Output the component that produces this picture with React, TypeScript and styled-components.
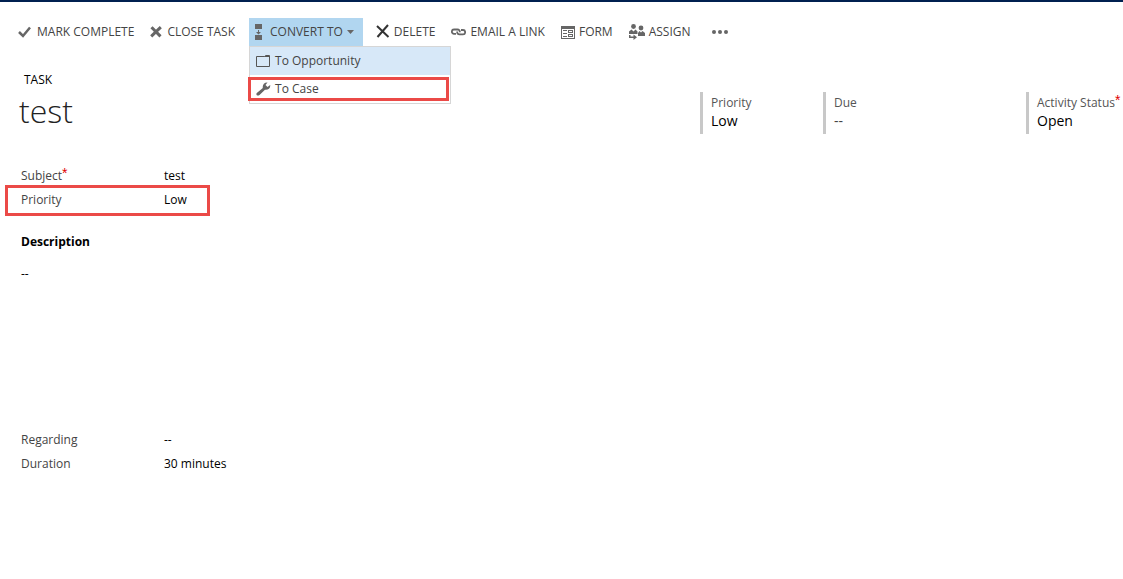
import React from "react";
import styled, { createGlobalStyle, css } from "styled-components";

const GlobalStyle = createGlobalStyle`
  * { box-sizing: border-box; }
  body {
    margin: 0;
    background: #fff;
    color: #000;
    font: 12px/16px "Open Sans", "Noto Sans", sans-serif;
  }
`;

const Page = styled.div`
  border-top: 2px solid #002050;
`;

const CommandBar = styled.nav`
  display: flex;
  align-items: center;
  padding: 16px 10px 0;
`;

const Command = styled.button<{ $open?: boolean; $wide?: boolean }>`
  display: flex;
  align-items: center;
  gap: 4px;
  height: 28px;
  padding: 0 ${(p) => (p.$wide ? 13 : 8)}px;
  border: 0;
  background: transparent;
  color: #444;
  font: inherit;
  white-space: nowrap;
  cursor: pointer;
  ${(p) => p.$open && css`
    padding: 0 9px 0 5px;
    background: #b1d6f0;
  `}
`;

const Icon = styled.svg`
  display: block;
  flex: none;
  fill: #666;
`;

const MenuAnchor = styled.div`
  position: relative;
  margin: 0 5px 0 6px;
`;

const Menu = styled.div`
  position: absolute;
  top: 28px;
  left: 0;
  width: 202px;
  border: 1px solid #d6d6d6;
  background: #fff;
`;

const highlight = css`
  position: relative;
  &::after {
    content: "";
    position: absolute;
    border: 3px solid #eb4a47;
    pointer-events: none;
  }
`;

const MenuItem = styled.button<{ $active?: boolean; $marked?: boolean }>`
  display: flex;
  align-items: center;
  gap: 4px;
  width: 100%;
  height: 28px;
  padding: 0 6px;
  border: 0;
  background: ${(p) => (p.$active ? "#d7e8f8" : "#fff")};
  color: #444;
  font: inherit;
  text-align: left;
  cursor: pointer;
  ${(p) => p.$marked && css`
    ${highlight}
    &::after { inset: 2px 1px 2px -2px; }
  `}
`;

const Header = styled.header`
  display: flex;
  justify-content: space-between;
  padding: 26px 0 0 19px;
`;

const Kind = styled.div`
  padding-left: 5px;
`;

const Title = styled.h1`
  margin: 0;
  font-size: 32px;
  line-height: 46px;
  font-weight: 300;
  color: #222;
`;

const Summary = styled.dl`
  display: grid;
  grid-template-columns: 123px 203px 97px;
  margin: 20px 0 0;
`;

const Fact = styled.div`
  height: 42px;
  padding: 3px 0 0 8px;
  border-left: 3px solid #c8c8c8;
  white-space: nowrap;
`;

const FactLabel = styled.dt`
  color: #555;
`;

const FactValue = styled.dd<{ $empty?: boolean }>`
  margin: 0;
  color: ${(p) => (p.$empty ? "#444" : "#000")};
  font-size: 14px;
  line-height: 20px;
`;

const Required = styled.sup`
  color: #e00000;
  font-family: "Liberation Sans", sans-serif;
  font-size: 14px;
  line-height: 0;
  vertical-align: 2px;
`;

const Form = styled.main`
  padding: 30px 0 0 5px;
`;

const Fields = styled.dl`
  width: 205px;
  margin: 0;
`;

const Row = styled.div<{ $marked?: boolean }>`
  display: grid;
  grid-template-columns: 143px 1fr;
  align-items: center;
  height: 24px;
  padding-left: 16px;
  white-space: nowrap;
  ${(p) => p.$marked && css`
    ${highlight}
    &::after { inset: -3px 0 -4px; }
  `}
`;

const Label = styled.dt`
  color: #444;
`;

const Value = styled.dd`
  margin: 0;
`;

const Section = styled.section`
  min-height: 216px;
  padding: 22px 16px 0;
`;

const SectionTitle = styled.h2`
  margin: 0 0 16px;
  font-size: 12px;
  line-height: 16px;
`;

const SectionText = styled.p`
  margin: 0;
`;

const Check = () => (
  <Icon width="15" height="14" viewBox="0 0 15 14"><path d="M1 7l4 4L12 2.500" stroke="#666" strokeWidth="2.500" style={{ fill: "none" }} /></Icon>
);
const Cross = () => (
  <Icon width="13" height="12" viewBox="0 0 13 12"><path d="M1.500 1.200l9 9.200M10.800 1.200l-9.600 9.200" stroke="#666" strokeWidth="3" fill="none" /></Icon>
);
const Convert = () => (
  <Icon width="12" height="16" viewBox="0 0 12 16"><path d="M1 0h7v5H1zM1 11h7v5H1zM4 6h1v2h2l-2.500 2.500L2 8h2z" /></Icon>
);
const Caret = () => (
  <Icon width="7" height="4" viewBox="0 0 7 4"><path d="M0 0h7L3.500 4z" /></Icon>
);
const Delete = () => (
  <Icon width="14" height="16" viewBox="0 0 14 16"><path d="M1 2l11.500 11M12 1L1.500 13" stroke="#333" strokeWidth="2" fill="none" /></Icon>
);
const Link = () => (
  <Icon width="15" height="8" viewBox="0 0 15 8"><path d="M5 5.800H3A2.100 2.100 0 013 1.500H6.500Q9 1.500 8.800 4.300M10 2h2a2.100 2.100 0 010 4.300H8.500Q6 6.300 6.200 3.500" stroke="#666" strokeWidth="1.800" style={{ fill: "none" }} /></Icon>
);
const FormIcon = () => (
  <Icon width="14" height="13" viewBox="0 0 14 13"><path fillRule="evenodd" d="M0 0h14v13H0zM1 3v9h12V3zM2 4h4v1H2zM2 7h4v1H2zM2 10h4v1H2zM7 4h5v3H7zM8 5v1h3V5zM7 8h5v3H7zM8 9v1h3V9z" /></Icon>
);
const Assign = () => (
  <Icon width="16" height="16" viewBox="0 0 16 16"><circle cx="4.500" cy="2.500" r="2.400" /><circle cx="12" cy="4" r="2.400" /><path d="M0 10V7.500L2.500 5.500l2 2 2-2L8.500 7.500V10zM9 12V9l1.500-2L12 8.500 13.500 7 16 9v3zM0 11h1.500v1.500h3V10.500L8 13.300 4.500 16v-2H0z" /></Icon>
);
const Dots = () => (
  <Icon width="16" height="4" viewBox="0 0 16 4"><circle cx="2" cy="2" r="2" /><circle cx="8" cy="2" r="2" /><circle cx="14" cy="2" r="2" /></Icon>
);
const Folder = () => (
  <Icon width="15" height="13" viewBox="0 0 15 13"><path d="M.5 1.500h8l1-1h4v11H.5zM8.500 1.500h5" stroke="#555" style={{ fill: "none" }} /></Icon>
);
const Wrench = () => (
  <Icon width="15" height="14" viewBox="0 0 15 14"><path d="M.8 11l6-5c-.5-3 1.500-5.700 4.700-5.500L9.500 3l2 2L14.200 3c.5 3-2.200 5.300-5.200 4.800L3.500 13C1.500 14.500-.5 12.800.8 11z" /></Icon>
);

export default function App() {
  return (
    <Page>
      <GlobalStyle />
      <CommandBar aria-label="Task commands">
        <Command><Check />MARK COMPLETE</Command>
        <Command><Cross />CLOSE TASK</Command>
        <MenuAnchor>
          <Command $open aria-expanded="true"><Convert />CONVERT TO<Caret /></Command>
          <Menu>
            <MenuItem $active><Folder />To Opportunity</MenuItem>
            <MenuItem $marked><Wrench />To Case</MenuItem>
          </Menu>
        </MenuAnchor>
        <Command><Delete />DELETE</Command>
        <Command><Link />EMAIL A LINK</Command>
        <Command><FormIcon />FORM</Command>
        <Command><Assign />ASSIGN</Command>
        <Command $wide aria-label="More commands"><Dots /></Command>
      </CommandBar>
      <Header>
        <div>
          <Kind>TASK</Kind>
          <Title>test</Title>
        </div>
        <Summary>
          <Fact><FactLabel>Priority</FactLabel><FactValue>Low</FactValue></Fact>
          <Fact><FactLabel>Due</FactLabel><FactValue $empty>--</FactValue></Fact>
          <Fact><FactLabel>Activity Status<Required>*</Required></FactLabel><FactValue>Open</FactValue></Fact>
        </Summary>
      </Header>
      <Form>
        <Fields>
          <Row><Label>Subject<Required>*</Required></Label><Value>test</Value></Row>
          <Row $marked><Label>Priority</Label><Value>Low</Value></Row>
        </Fields>
        <Section>
          <SectionTitle>Description</SectionTitle>
          <SectionText>--</SectionText>
        </Section>
        <Fields>
          <Row><Label>Regarding</Label><Value>--</Value></Row>
          <Row><Label>Duration</Label><Value>30 minutes</Value></Row>
        </Fields>
      </Form>
    </Page>
  );
}
